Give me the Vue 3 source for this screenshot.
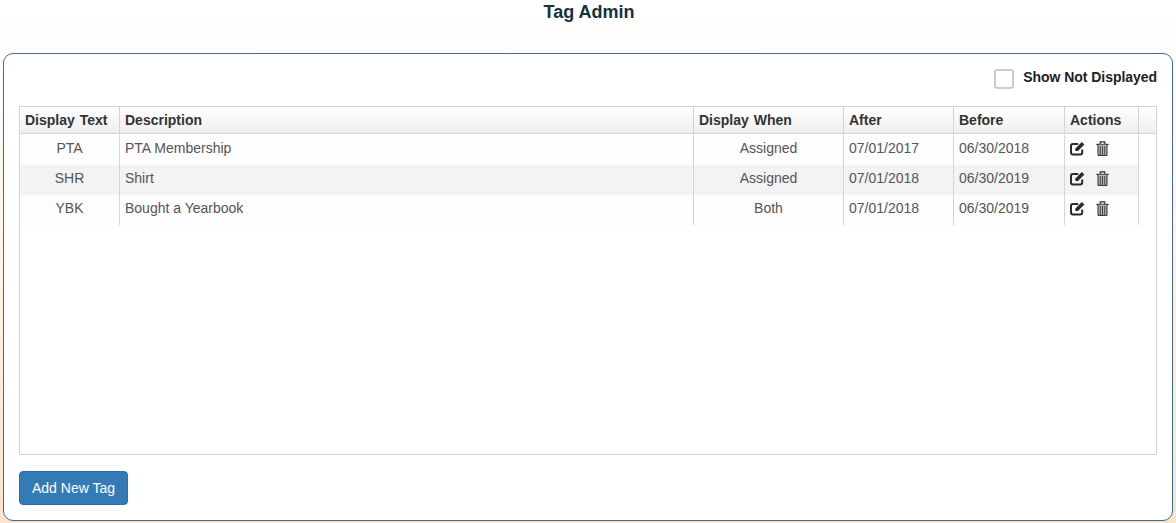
<script setup>
const rows = [
  { code: 'PTA', description: 'PTA Membership', when: 'Assigned', after: '07/01/2017', before: '06/30/2018' },
  { code: 'SHR', description: 'Shirt', when: 'Assigned', after: '07/01/2018', before: '06/30/2019' },
  { code: 'YBK', description: 'Bought a Yearbook', when: 'Both', after: '07/01/2018', before: '06/30/2019' },
]
</script>

<template>
  <div class="page">
    <h1 class="title">Tag Admin</h1>
    <section class="panel">
      <div class="toolbar">
        <span class="check"></span>
        <span class="check-label">Show Not Displayed</span>
      </div>
      <div class="grid">
        <div class="row head">
          <div class="cell c1">Display Text</div>
          <div class="cell c2">Description</div>
          <div class="cell c3">Display When</div>
          <div class="cell c4">After</div>
          <div class="cell c5">Before</div>
          <div class="cell c6">Actions</div>
          <div class="cell c7"></div>
        </div>
        <div v-for="(r, i) in rows" :key="r.code" class="row body" :class="{ alt: i === 1 }">
          <div class="cell c1 center">{{ r.code }}</div>
          <div class="cell c2">{{ r.description }}</div>
          <div class="cell c3 center">{{ r.when }}</div>
          <div class="cell c4">{{ r.after }}</div>
          <div class="cell c5">{{ r.before }}</div>
          <div class="cell c6 icons">
            <svg class="ic" width="15" height="15" viewBox="0 0 15 15" fill="none">
              <path d="M12.2 8.4V11.6A2 2 0 0 1 10.2 13.6H3A2 2 0 0 1 1 11.6V5A2 2 0 0 1 3 3H8.2" stroke="#2a2a2a" stroke-width="2" />
              <path d="M5.4 7.4L11.8 1L14.4 3.6L8 10H5.4Z" fill="#2a2a2a" />
            </svg>
            <svg class="ic" width="13" height="15" viewBox="0 0 13 15" fill="none">
              <path d="M0.4 3.4H12.6" stroke="#2a2a2a" stroke-width="1.2" />
              <path d="M4.2 3V0.9H8.8V3" stroke="#2a2a2a" stroke-width="1.1" />
              <path d="M2 3.6V14.4H11V3.6" stroke="#2a2a2a" stroke-width="1" fill="#b5b5b5" />
              <path d="M4.3 5V13.8M6.5 5V13.8M8.7 5V13.8" stroke="#2a2a2a" stroke-width="0.8" />
            </svg>
          </div>
          <div class="cell c7"></div>
        </div>
      </div>
      <button class="add" type="button">Add New Tag</button>
    </section>
  </div>
</template>

<style>
html, body { margin: 0; height: 100%; }
body { background: linear-gradient(#ffffff 0%, #fdf0e2 60%, #fbe3cd 100%); }
</style>

<style scoped>
.page {
  height: 523px;
  box-sizing: border-box;
  padding: 0 3px 2px;
  display: flex;
  flex-direction: column;
  overflow: hidden;
  font-family: "Liberation Sans", Arial, sans-serif;
  font-size: 14px;
  color: #555;
}
.title {
  margin: 0;
  height: 53px;
  padding: 1px 0 0 2px;
  box-sizing: border-box;
  font-size: 18px;
  line-height: 22px;
  font-weight: 700;
  text-align: center;
  color: #12333f;
}
.panel {
  flex: 1;
  min-height: 0;
  box-sizing: border-box;
  display: flex;
  flex-direction: column;
  background: #fff;
  border: 1px solid #3f6c9e;
  border-radius: 10px;
  padding: 15px;
}
.toolbar {
  display: flex;
  align-items: flex-start;
  justify-content: flex-end;
  height: 21px;
  gap: 9px;
  margin-bottom: 16px;
}
.check {
  width: 20px;
  height: 20px;
  box-sizing: border-box;
  border: 2px solid #ccc;
  border-radius: 3px;
  background: #fff;
}
.check-label {
  font-weight: 700;
  font-size: 14px;
  line-height: 16px;
  letter-spacing: -0.05px;
  color: #222;
}
.grid {
  height: 349px;
  box-sizing: border-box;
  border: 1px solid #d4d4d4;
  margin-bottom: 16px;
}
.row {
  display: grid;
  grid-template-columns: 100px 574px 150px 110px 111px 74px 1fr;
}
.head {
  height: 27px;
  box-sizing: border-box;
  border-bottom: 1px solid #d4d4d4;
  background: linear-gradient(#ffffff, #efefef);
  font-weight: 700;
  color: #333;
  word-spacing: 1px;
}
.body { height: 30px; background: #fdfdfd; }
.body:nth-child(2) { margin-top: 1px; }
.body.alt { background: #f3f3f3; }
.cell {
  box-sizing: border-box;
  padding: 0 5px;
  display: flex;
  align-items: center;
  border-right: 1px solid #d4d4d4;
  white-space: nowrap;
}
.body .cell { padding-bottom: 5px; }
.body .icons { padding-bottom: 3px; }
.c7 { border-right: 0; }
.body .c7 { background: #fff; }
.center { justify-content: center; }
.icons { gap: 11px; }
.ic { flex: none; }
.add {
  align-self: flex-start;
  width: 109px;
  height: 34px;
  padding: 0;
  font: inherit;
  font-size: 14px;
  color: #fff;
  background: #337ab7;
  border: 1px solid #2e6da4;
  border-radius: 4px;
}
</style>
